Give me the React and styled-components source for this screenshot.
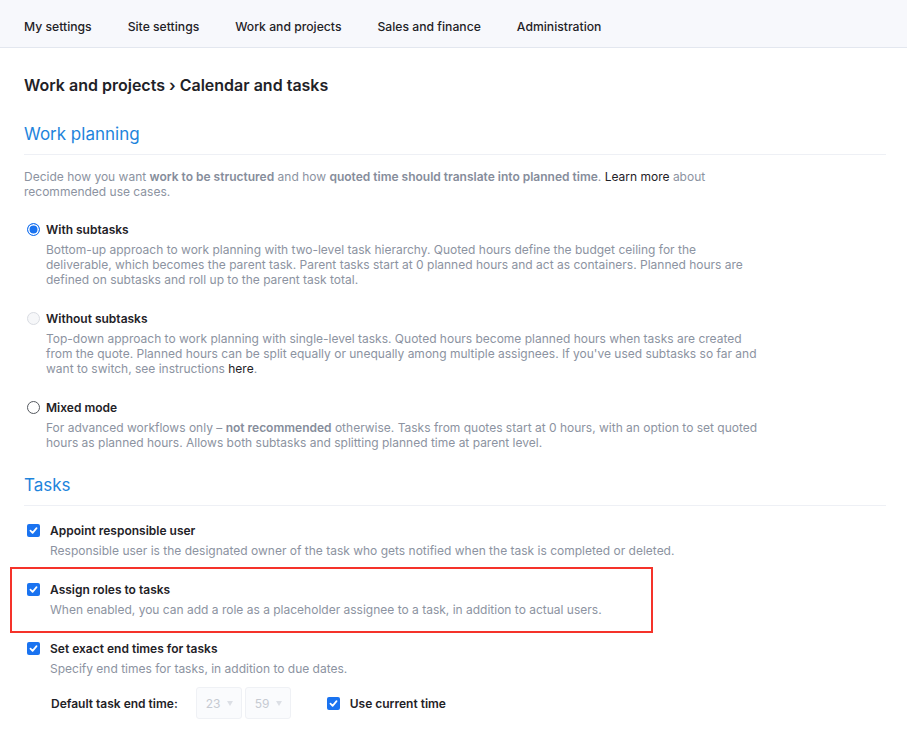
import React from "react";
import styled, { createGlobalStyle, css } from "styled-components";

const GlobalStyle = createGlobalStyle`
  body {
    margin: 0;
    background: #fff;
    font-family: Inter, "Noto Sans", sans-serif;
    color: #1f2227;
    -webkit-font-smoothing: antialiased;
  }
`;

const TopNav = styled.nav`
  display: flex;
  align-items: center;
  gap: 36px;
  height: 48px;
  padding: 6px 24px 0;
  background: #f7f8fc;
  border-bottom: 1px solid #e3e7ef;
  box-sizing: border-box;
`;

const NavItem = styled.a`
  font-size: 12.2px;
  font-weight: 500;
  color: #1f2227;
  text-decoration: none;
`;

const Page = styled.main`
  padding: 27px 21px 40px 24px;
`;

const Title = styled.h1`
  margin: 0;
  font-size: 16px;
  line-height: 20px;
  font-weight: 600;
  color: #1f2227;
`;

const Section = styled.section`
  margin-top: ${(p) => p.$top}px;
`;

const SectionHead = styled.h2`
  margin: 0;
  padding-bottom: 9px;
  font-size: 17px;
  line-height: 22px;
  font-weight: 400;
  color: #1e84dc;
  border-bottom: 1px solid #eef0f5;
`;

const Intro = styled.p`
  margin: 14px 0 0;
  max-width: 716px;
  font-size: 12px;
  line-height: 15px;
  color: #8c93a1;

  b {
    font-weight: 600;
    color: #868d9b;
  }
`;

const Link = styled.span`
  color: #1f2227;
`;

const OptionList = styled.div`
  display: flex;
  flex-direction: column;
  gap: 24px;
  margin-top: ${(p) => p.$top}px;
  padding-left: 3px;
`;

const Option = styled.div`
  position: relative;
  display: grid;
  grid-template-columns: 13px 1fr;
  column-gap: ${(p) => p.$gap}px;
  row-gap: 5px;

  ${(p) =>
    p.$highlight &&
    css`
      &::after {
        content: "";
        position: absolute;
        top: -15px;
        left: -17px;
        width: 639px;
        height: 62px;
        border: 2px solid #f5332a;
        pointer-events: none;
      }
    `}
`;

const Label = styled.div`
  font-size: 12px;
  line-height: 15px;
  font-weight: 600;
  color: #1f2227;
`;

const Desc = styled.div`
  grid-column: 2;
  max-width: 716px;
  font-size: 12px;
  line-height: 15px;
  color: #8c93a1;

  b {
    font-weight: 600;
    color: #868d9b;
  }
`;

const Radio = styled.span`
  width: 13px;
  height: 13px;
  margin-top: 1px;
  box-sizing: border-box;
  border-radius: 50%;
  background: #fff;
  ${(p) =>
    p.$state === "checked" &&
    css`
      border: 1.5px solid #1a73f0;
      box-shadow: inset 0 0 0 1.5px #fff;
      background: #1a73f0;
    `}
  ${(p) =>
    p.$state === "disabled" &&
    css`
      border: 1px solid #d9dce2;
      background: #f6f7f9;
    `}
  ${(p) =>
    p.$state === "off" &&
    css`
      border: 1px solid #55595f;
    `}
`;

const Box = styled.span`
  display: flex;
  align-items: center;
  justify-content: center;
  width: 13px;
  height: 13px;
  margin-top: 1px;
  border-radius: 2px;
  background: #1a73f0;

  svg {
    display: block;
  }
`;

const Check = () => (
  <Box>
    <svg width="9" height="9" viewBox="0 0 10 10">
      <path d="M1.6 5.2 L4 7.6 L8.4 2.4" fill="none" stroke="#fff" strokeWidth="1.9" strokeLinecap="round" strokeLinejoin="round" />
    </svg>
  </Box>
);

const TimeRow = styled.div`
  display: flex;
  align-items: center;
  margin-top: 11px;
  padding-left: 27px;
`;

const TimeLabel = styled.span`
  font-size: 12px;
  font-weight: 600;
  color: #1f2227;
  margin-right: 18px;
`;

const Selects = styled.div`
  display: flex;
  gap: 3px;
  margin-right: 36px;
`;

const Select = styled.div`
  display: flex;
  align-items: center;
  gap: 7px;
  width: 46px;
  height: 32px;
  box-sizing: border-box;
  padding-left: 9px;
  border: 1px solid #eff1f5;
  border-radius: 3px;
  background: #fafbfd;
  font-size: 12px;
  color: #c6cad2;
`;

const Caret = styled.span`
  width: 0;
  height: 0;
  border-left: 3.5px solid transparent;
  border-right: 3.5px solid transparent;
  border-top: 5px solid #dcdfe5;
`;

const Inline = styled.label`
  display: flex;
  align-items: center;
  gap: 10px;
  font-size: 12px;
  font-weight: 600;
  color: #1f2227;
`;

const nav = ["My settings", "Site settings", "Work and projects", "Sales and finance", "Administration"];

export default function App() {
  return (
    <>
      <GlobalStyle />
      <TopNav>
        {nav.map((n) => (
          <NavItem key={n}>{n}</NavItem>
        ))}
      </TopNav>
      <Page>
        <Title>Work and projects › Calendar and tasks</Title>

        <Section $top={28}>
          <SectionHead>Work planning</SectionHead>
          <Intro>
            Decide how you want <b>work to be structured</b> and how <b>quoted time should translate into planned time</b>.{" "}
            <Link>Learn more</Link> about recommended use cases.
          </Intro>
          <OptionList $top={23}>
            <Option $gap={6}>
              <Radio $state="checked" />
              <Label>With subtasks</Label>
              <Desc>
                Bottom-up approach to work planning with two-level task hierarchy. Quoted hours define the budget ceiling for the
                deliverable, which becomes the parent task. Parent tasks start at 0 planned hours and act as containers. Planned hours are
                defined on subtasks and roll up to the parent task total.
              </Desc>
            </Option>
            <Option $gap={6}>
              <Radio $state="disabled" />
              <Label>Without subtasks</Label>
              <Desc>
                Top-down approach to work planning with single-level tasks. Quoted hours become planned hours when tasks are created
                from the quote. Planned hours can be split equally or unequally among multiple assignees. If you've used subtasks so far and
                want to switch, see instructions <Link>here</Link>.
              </Desc>
            </Option>
            <Option $gap={6}>
              <Radio $state="off" />
              <Label>Mixed mode</Label>
              <Desc>
                For advanced workflows only – <b>not recommended</b> otherwise. Tasks from quotes start at 0 hours, with an option to set quoted
                hours as planned hours. Allows both subtasks and splitting planned time at parent level.
              </Desc>
            </Option>
          </OptionList>
        </Section>

        <Section $top={24}>
          <SectionHead>Tasks</SectionHead>
          <OptionList $top={17}>
            <Option $gap={10}>
              <Check />
              <Label>Appoint responsible user</Label>
              <Desc>Responsible user is the designated owner of the task who gets notified when the task is completed or deleted.</Desc>
            </Option>
            <Option $gap={10} $highlight>
              <Check />
              <Label>Assign roles to tasks</Label>
              <Desc>When enabled, you can add a role as a placeholder assignee to a task, in addition to actual users.</Desc>
            </Option>
            <Option $gap={10}>
              <Check />
              <Label>Set exact end times for tasks</Label>
              <Desc>Specify end times for tasks, in addition to due dates.</Desc>
            </Option>
          </OptionList>
          <TimeRow>
            <TimeLabel>Default task end time:</TimeLabel>
            <Selects>
              <Select>
                23 <Caret />
              </Select>
              <Select>
                59 <Caret />
              </Select>
            </Selects>
            <Inline>
              <Check />
              Use current time
            </Inline>
          </TimeRow>
        </Section>
      </Page>
    </>
  );
}
